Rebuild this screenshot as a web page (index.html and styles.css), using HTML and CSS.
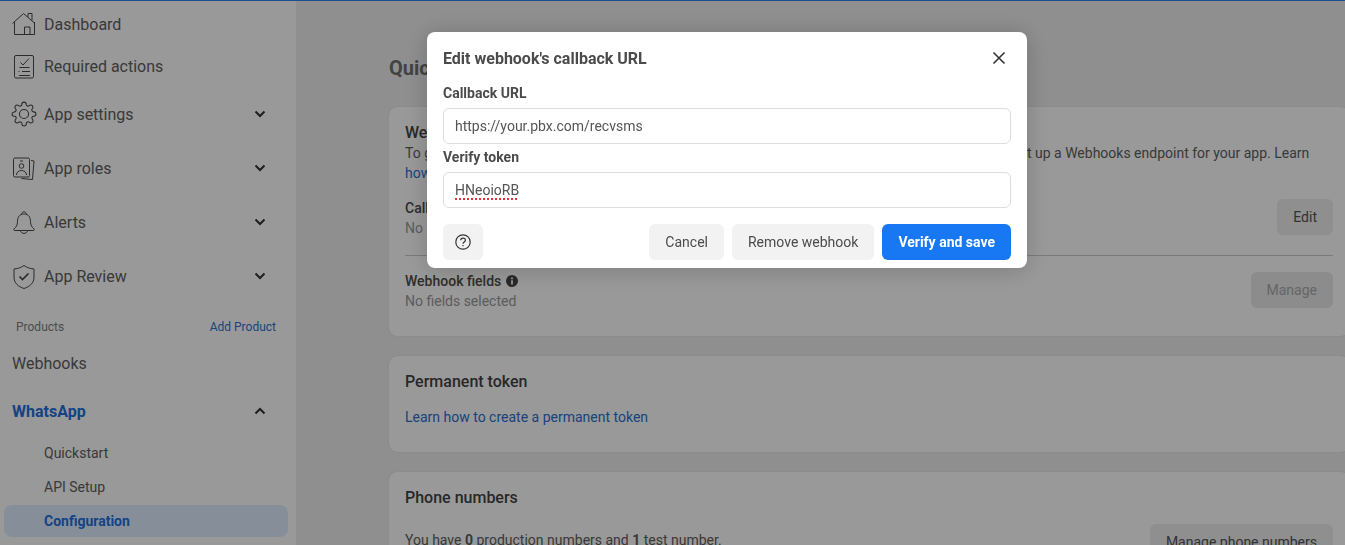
FILE: index.html
```html
<!DOCTYPE html>
<html lang="en">
    <head>
        <meta charset="UTF-8" />
        <meta name="viewport" content="width=device-width, initial-scale=1.0" />
        <title>Configuration</title>
        <link rel="stylesheet" href="styles.css">
    </head>
    <body>
        <div class="page">
            <nav class="sidebar">
                <a class="nav-item nav-short">
                    <svg class="nav-icon" viewBox="0 0 26 26" fill="none" stroke="currentColor">
                        <path d="M1.500 12.500 12.500 2.500 24 12.500" />
                        <path d="M3.500 11v12.500h20V11" />
                        <path d="M13.500 23.500V16H19v7.500" />
                        <path d="M17 6V2.500h4v7" />
                    </svg>
                    Dashboard
                </a>
                <a class="nav-item nav-short">
                    <svg class="nav-icon" viewBox="0 0 26 26" fill="none" stroke="currentColor">
                        <rect x="3.500" y="2.500" width="19" height="22.500" rx="1.500" />
                        <path d="M9.500 9.500l2.500 2.500 6-6.500" />
                        <path d="M8.500 14.500h10M11 18.500h8M8 22.500h11" />
                        <path d="M7.500 18.500h1" />
                    </svg>
                    Required actions
                </a>
                <a class="nav-item">
                    <svg class="nav-icon" viewBox="0 0 24 24" fill="none" stroke="currentColor" stroke-width="0.95">
                        <circle cx="12" cy="12" r="4.200" />
                        <path d="M19.400 15a1.650 1.650 0 0 0 .33 1.820l.06.06a2 2 0 0 1 0 2.830 2 2 0 0 1-2.830 0l-.06-.06a1.650 1.650 0 0 0-1.820-.33 1.650 1.650 0 0 0-1 1.510V21a2 2 0 0 1-2 2 2 2 0 0 1-2-2v-.09A1.650 1.650 0 0 0 9 19.400a1.650 1.650 0 0 0-1.820.33l-.06.06a2 2 0 0 1-2.830 0 2 2 0 0 1 0-2.830l.06-.06a1.650 1.650 0 0 0 .33-1.820 1.650 1.650 0 0 0-1.510-1H3a2 2 0 0 1-2-2 2 2 0 0 1 2-2h.09A1.650 1.650 0 0 0 4.600 9a1.650 1.650 0 0 0-.33-1.820l-.06-.06a2 2 0 0 1 0-2.830 2 2 0 0 1 2.830 0l.06.06a1.650 1.650 0 0 0 1.820.33H9a1.650 1.650 0 0 0 1-1.510V3a2 2 0 0 1 2-2 2 2 0 0 1 2 2v.09a1.650 1.650 0 0 0 1 1.510 1.650 1.650 0 0 0 1.820-.33l.06-.06a2 2 0 0 1 2.830 0 2 2 0 0 1 0 2.830l-.06.06a1.650 1.650 0 0 0-.33 1.820V9a1.650 1.650 0 0 0 1.510 1H21a2 2 0 0 1 2 2 2 2 0 0 1-2 2h-.09a1.650 1.650 0 0 0-1.510 1z" />
                    </svg>
                    App settings
                    <svg class="chevron" viewBox="0 0 12 8" fill="none" stroke="currentColor"><path d="M1.500 1.500 6 6l4.500-4.500" /></svg>
                </a>
                <a class="nav-item">
                    <svg class="nav-icon" viewBox="0 0 26 26" fill="none" stroke="currentColor">
                        <rect x="2.500" y="3" width="16" height="19" rx="1.500" />
                        <path d="M20 5.500l3 .5-1.500 18.500-11-1" />
                        <circle cx="10.500" cy="11" r="2.300" />
                        <path d="M5.500 20c0-6 10-6 10 0" />
                        <path d="M9 6h3" />
                    </svg>
                    App roles
                    <svg class="chevron" viewBox="0 0 12 8" fill="none" stroke="currentColor"><path d="M1.500 1.500 6 6l4.500-4.500" /></svg>
                </a>
                <a class="nav-item">
                    <svg class="nav-icon" viewBox="0 0 26 26" fill="none" stroke="currentColor">
                        <path d="M13 5c-4.500 0-6.500 3.300-6.500 7.500 0 4-1.500 5.500-3.500 7.500-.7.8-.3 1.500.6 1.500h18.800c.9 0 1.300-.7.6-1.500-2-2-3.500-3.500-3.500-7.500C19.500 8.300 17.500 5 13 5z" />
                        <path d="M10.500 5.500c0-3.500 5-3.500 5 0" />
                        <path d="M9.500 21.500c0 3.800 7 3.800 7 0" />
                    </svg>
                    Alerts
                    <svg class="chevron" viewBox="0 0 12 8" fill="none" stroke="currentColor"><path d="M1.500 1.500 6 6l4.500-4.500" /></svg>
                </a>
                <a class="nav-item">
                    <svg class="nav-icon" viewBox="0 0 26 26" fill="none" stroke="currentColor">
                        <path d="M13 2.500c3 2 6 3.200 10 3.500v8c0 6-4 9.500-10 11.500C7 23.500 3 20 3 14V6c4-.3 7-1.500 10-3.500z" />
                        <path d="M8.500 13.500l3 3 6-6" stroke-width="1.700" />
                    </svg>
                    App Review
                    <svg class="chevron" viewBox="0 0 12 8" fill="none" stroke="currentColor"><path d="M1.500 1.500 6 6l4.500-4.500" /></svg>
                </a>
                <div class="nav-section">
                    <span>Products</span>
                    <a class="nav-add">Add Product</a>
                </div>
                <a class="nav-product">Webhooks</a>
                <a class="nav-product nav-open">
                    WhatsApp
                    <svg class="chevron chevron-up" viewBox="0 0 12 8" fill="none" stroke="currentColor"><path d="M1.500 6.500 6 2l4.500 4.500" /></svg>
                </a>
                <a class="nav-sub">Quickstart</a>
                <a class="nav-sub">API Setup</a>
                <a class="nav-sub nav-current">Configuration</a>
            </nav>

            <main class="content">
                <h1 class="page-title">Quickstart</h1>

                <section class="card card-webhooks">
                    <h2 class="card-title">Webhooks</h2>
                    <p class="card-text">To get alerts, when you receive a message, or when a message's status changes, you need to first set up a Webhooks endpoint for your app. Learn<br><a class="link">how to configure Webhooks</a></p>
                    <div class="field-row">
                        <div>
                            <div class="field-name">Callback URL</div>
                            <div class="field-value">No URL set</div>
                        </div>
                        <button class="btn-grey btn-edit">Edit</button>
                    </div>
                    <div class="field-row field-row-line">
                        <div class="field-text">
                            <div class="field-name">
                                Webhook fields
                                <svg class="info" viewBox="0 0 12 12"><circle cx="6" cy="6" r="6" fill="currentColor" /><path d="M5.100 5.200h1.800V9.500H5.100zM5.100 2.500h1.800v1.700H5.100z" fill="#fff" /></svg>
                            </div>
                            <div class="field-value">No fields selected</div>
                        </div>
                        <button class="btn-grey btn-disabled">Manage</button>
                    </div>
                </section>

                <section class="card card-token">
                    <h2 class="card-title">Permanent token</h2>
                    <a class="link token-link">Learn how to create a permanent token</a>
                </section>

                <section class="card card-phone">
                    <h2 class="card-title">Phone numbers</h2>
                    <div class="phone-row">
                        <p class="card-text phone-text">You have <b>0</b> production numbers and <b>1</b> test number.</p>
                        <button class="btn-grey">Manage phone numbers</button>
                    </div>
                </section>
            </main>
        </div>

        <div class="overlay">
            <div class="modal">
                <div class="modal-head">
                    <h3 class="modal-title">Edit webhook's callback URL</h3>
                    <svg class="modal-close" viewBox="0 0 14 14" fill="none" stroke="currentColor" stroke-width="1.600"><path d="M1.500 1.500l11 11M12.500 1.500l-11 11" /></svg>
                </div>
                <div class="modal-label">Callback URL</div>
                <div class="modal-input">https://your.pbx.com/recvsms</div>
                <div class="modal-label label-second">Verify token</div>
                <div class="modal-input"><span class="misspelled">HNeoioRB</span></div>
                <div class="modal-foot">
                    <button class="btn-light btn-help">
                        <svg viewBox="0 0 16 16" width="16" height="16" fill="none" stroke="currentColor" stroke-width="1.200">
                            <circle cx="8" cy="8" r="7.200" />
                            <path d="M5.700 6.300c0-3 4.700-3 4.700-.1 0 1.700-2.400 1.800-2.400 3.500" />
                            <path d="M8 11v1.300" />
                        </svg>
                    </button>
                    <span class="foot-gap"></span>
                    <button class="btn-light">Cancel</button>
                    <button class="btn-light">Remove webhook</button>
                    <button class="btn-primary">Verify and save</button>
                </div>
            </div>
        </div>
    </body>
</html>
```

FILE: styles.css
```css
* {
    box-sizing: border-box;
}
html,
body {
    margin: 0;
    height: 545px;
    overflow: hidden;
}
body {
    font-family: Roboto, "Liberation Sans", sans-serif;
    color: #606060;
    background-color: #eeeeee;
}
button {
    font-family: inherit;
    border: none;
}
.page {
    display: flex;
    width: 1349px;
    height: 545px;
    border-top: 1px solid #2f80f0;
}

/* sidebar */
.sidebar {
    flex: 0 0 296px;
    background-color: #ffffff;
    padding: 2px 8px 0 4px;
    display: flex;
    flex-direction: column;
}
.nav-item {
    display: flex;
    align-items: center;
    flex: 0 0 54px;
    padding-left: 7px;
    font-size: 16px;
}
.nav-short {
    flex-basis: 42px;
}
.nav-icon {
    flex: 0 0 26px;
    width: 26px;
    height: 26px;
    margin-right: 7px;
    stroke-width: 1;
    color: #4a4a4a;
}
.chevron {
    width: 12px;
    height: 8px;
    margin-left: auto;
    margin-right: 22px;
    stroke-width: 2;
    color: #333333;
}
.nav-section {
    display: flex;
    justify-content: space-between;
    align-items: center;
    height: 26px;
    margin-top: 11px;
    margin-bottom: -1px;
    padding: 0 12px 0 12px;
    font-size: 12px;
    color: #808080;
}
.nav-add {
    color: #2f6fd0;
}
.nav-product {
    display: flex;
    align-items: center;
    height: 48px;
    padding-left: 8px;
    font-size: 16px;
}
.nav-open {
    color: #1f70e0;
    font-weight: 700;
}
.nav-sub {
    display: flex;
    align-items: center;
    height: 32px;
    margin-top: 2px;
    padding-left: 40px;
    font-size: 14px;
    border-radius: 8px;
}
.nav-current {
    background-color: #dfeeff;
    color: #1f70e0;
    font-weight: 700;
}

/* main column */
.content {
    flex: 1;
    padding: 53px 0 0 93px;
}
.page-title {
    margin: 0 0 24px;
    font-size: 20px;
    line-height: 29px;
    font-weight: 700;
    color: #707070;
}
.card {
    background-color: #ffffff;
    border-radius: 8px;
    padding: 16px;
    margin-bottom: 20px;
    box-shadow: 0 0 1px rgba(0, 0, 0, 0.2);
}
.card-webhooks {
    height: 229px;
}
.card-title {
    margin: 0;
    font-size: 16px;
    line-height: 20px;
    font-weight: 500;
    color: #444444;
}
.card-text {
    margin: 0;
    font-size: 14px;
    line-height: 20px;
    color: #606060;
}
.link {
    color: #2a70d0;
}
.field-row {
    display: flex;
    justify-content: space-between;
    align-items: flex-start;
    margin-top: 15px;
    padding-bottom: 17px;
}
.field-row-line {
    margin-top: 0;
    padding-top: 16px;
    padding-bottom: 12px;
    border-top: 1px solid #cccccc;
}
.field-text {
    margin-top: -1px;
}
.field-name {
    display: flex;
    align-items: center;
    gap: 5px;
    font-size: 14px;
    line-height: 20px;
    font-weight: 500;
    color: #4c4c4c;
}
.field-value {
    font-size: 14px;
    line-height: 20px;
    color: #9a9a9a;
}
.info {
    width: 12px;
    height: 12px;
    color: #444444;
}
.btn-grey {
    height: 36px;
    padding: 0 16px;
    border-radius: 6px;
    background-color: #eeeeee;
    color: #555555;
    font-size: 14px;
}
.btn-edit {
    margin-top: 1px;
}
.btn-disabled {
    background-color: #e9e9e9;
    color: #aaaaaa;
}
.card-token {
    height: 96px;
}
.token-link {
    display: block;
    margin-top: 15px;
    font-size: 14px;
    line-height: 20px;
}
.card-phone {
    height: 200px;
}
.phone-row {
    display: flex;
    justify-content: space-between;
    align-items: center;
    margin-top: 16px;
}
.phone-text {
    margin-top: -4px;
}

/* dialog */
.overlay {
    position: fixed;
    inset: 0;
    background-color: rgba(0, 0, 0, 0.4);
}
.modal {
    position: absolute;
    left: 427px;
    top: 32px;
    width: 600px;
    height: 236px;
    padding: 0 16px;
    background-color: #ffffff;
    border-radius: 8px;
    box-shadow: 0 2px 24px rgba(0, 0, 0, 0.2);
}
.modal-head {
    display: flex;
    justify-content: space-between;
    align-items: center;
    height: 52px;
}
.modal-title {
    margin: 0;
    font-size: 16px;
    font-weight: 700;
    color: #4b4b4b;
}
.modal-close {
    width: 14px;
    height: 14px;
    margin-right: 5px;
    color: #333333;
}
.modal-label {
    font-size: 14px;
    line-height: 18px;
    font-weight: 700;
    color: #4b4b4b;
    margin-bottom: 6px;
}
.label-second {
    margin-top: 4px;
}
.modal-input {
    display: flex;
    align-items: center;
    height: 36px;
    padding: 0 11px;
    border: 1px solid #dddddd;
    border-radius: 6px;
    font-size: 14px;
    color: #555555;
}
.misspelled {
    text-decoration: underline dotted #e5303f 2px;
    text-underline-offset: 3px;
}
.modal-foot {
    display: flex;
    gap: 8px;
    margin-top: 16px;
}
.foot-gap {
    flex: 1;
}
.btn-light {
    height: 36px;
    padding: 0 16px;
    border-radius: 6px;
    background-color: #f2f2f2;
    color: #4b4b4b;
    font-size: 14px;
}
.btn-help {
    display: flex;
    align-items: center;
    justify-content: center;
    width: 40px;
    padding: 0;
    color: #333333;
}
.btn-primary {
    height: 36px;
    padding: 0 16px;
    border-radius: 6px;
    background-color: #1877f2;
    color: #ffffff;
    font-size: 14px;
    font-weight: 700;
}
```
